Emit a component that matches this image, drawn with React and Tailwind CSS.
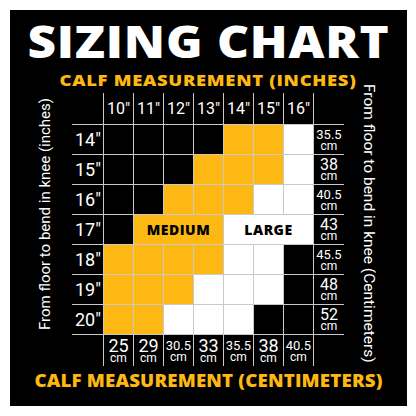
const Y = "bg-[#fdb813]";
const LINE = "border-[#c9c9c9]";

const header = ["10″", "11″", "12″", "13″", "14″", "15″", "16″"];

const rows = [
  { label: "14″", cm: "35.5", cells: "BBBBYYW" },
  { label: "15″", cm: "38", cells: "BBBYYYW" },
  { label: "16″", cm: "40.5", cells: "BBYYYWW" },
  { label: "17″", cm: "43", merged: true },
  { label: "18″", cm: "45.5", cells: "YYYYWWB" },
  { label: "19″", cm: "48", cells: "YYYWWWB" },
  { label: "20″", cm: "52", cells: "YYWWWBB" },
];

const bottom = ["25", "29", "30.5", "33", "35.5", "38", "40.5"];

const fill = { B: "bg-black", Y: Y, W: "bg-white" };

function Cm({ value, big }) {
  const small = value.includes(".");
  return (
    <div className="flex flex-col items-center text-white">
      <span className={small ? "text-[13px] leading-[12px]" : big ? "text-[18px] leading-[14px]" : "text-[16px] leading-[13px]"}>
        {value}
      </span>
      <span className="text-[12px] leading-[10px]">cm</span>
    </div>
  );
}

function Row({ row }) {
  const label = "flex items-center justify-center text-black font-extrabold text-[14px] tracking-[0.5px] [font-family:'Open_Sans',sans-serif]";
  return (
    <div className={`flex h-[30px] border-t ${LINE}`}>
      <div className="w-[31px] flex items-center pl-[3px] text-white text-[18px]">{row.label}</div>
      {row.merged ? (
        <>
          <div className={`w-[30px] bg-black border-l ${LINE}`} />
          <div className={`w-[90px] ${Y} border-l ${LINE} ${label}`}>MEDIUM</div>
          <div className={`w-[90px] bg-white border-l ${LINE} ${label}`}>LARGE</div>
        </>
      ) : (
        row.cells.split("").map((c, i) => (
          <div key={i} className={`w-[30px] ${fill[c]} border-l ${LINE}`} />
        ))
      )}
      <div className={`w-[31px] border-l ${LINE} flex items-center justify-center`}>
        <Cm value={row.cm} />
      </div>
    </div>
  );
}

export default function App() {
  return (
    <div className="w-[416px] h-[416px] bg-white pt-[10px] pl-[10px] font-['Roboto',sans-serif]">
      <div className="w-[397px] h-[396px] bg-black flex flex-col">
        {/* Title */}
        <div className="pt-[8px] text-center block scale-x-[1.1] text-white font-extrabold text-[45px] leading-[45px] tracking-[0.7px] [font-family:'Open_Sans',sans-serif]">
          SIZING CHART
        </div>

        <div className="flex items-start">
          {/* left vertical label */}
          <div className="w-[62px] flex items-start justify-center pl-[9px] pt-[35px]">
            <span className="text-white text-[15px] leading-none whitespace-nowrap [writing-mode:vertical-rl] rotate-180">
              From floor to bend in knee (inches)
            </span>
          </div>

          {/* center table */}
          <div className="w-[272px] flex flex-col">
            <div className="mt-[7px] text-center scale-x-[1.15] text-[#fdb813] font-extrabold text-[16px] leading-[20px] tracking-[0.6px] whitespace-nowrap [font-family:'Open_Sans',sans-serif]">
              CALF MEASUREMENT (INCHES)
            </div>
            <div className="flex h-[31px] mt-[3px]">
              <div className="w-[31px]" />
              {header.map((h) => (
                <div key={h} className={`w-[30px] border-l ${LINE} flex items-center justify-center text-white text-[16px]`}>
                  {h}
                </div>
              ))}
              <div className={`w-[31px] border-l ${LINE}`} />
            </div>
            {rows.map((r) => (
              <Row key={r.label} row={r} />
            ))}
            <div className={`flex h-[32px] border-t ${LINE}`}>
              <div className="w-[31px]" />
              {bottom.map((b) => (
                <div key={b} className={`w-[30px] border-l ${LINE} flex items-center justify-center`}>
                  <Cm value={b} big />
                </div>
              ))}
              <div className={`w-[31px] border-l ${LINE}`} />
            </div>
          </div>

          {/* right vertical label */}
          <div className="w-[63px] flex items-start justify-center pr-[14px] pt-[21px]">
            <span className="text-white text-[15.5px] leading-none whitespace-nowrap [writing-mode:vertical-rl]">
              From floor to bend in knee (Centimeters)
            </span>
          </div>
        </div>

        <div className="mt-[6px] text-center scale-x-[1.1] text-[#fdb813] font-extrabold text-[17px] leading-[17px] tracking-[0.15px] whitespace-nowrap [font-family:'Open_Sans',sans-serif]">
          CALF MEASUREMENT (CENTIMETERS)
        </div>
      </div>
    </div>
  );
}
